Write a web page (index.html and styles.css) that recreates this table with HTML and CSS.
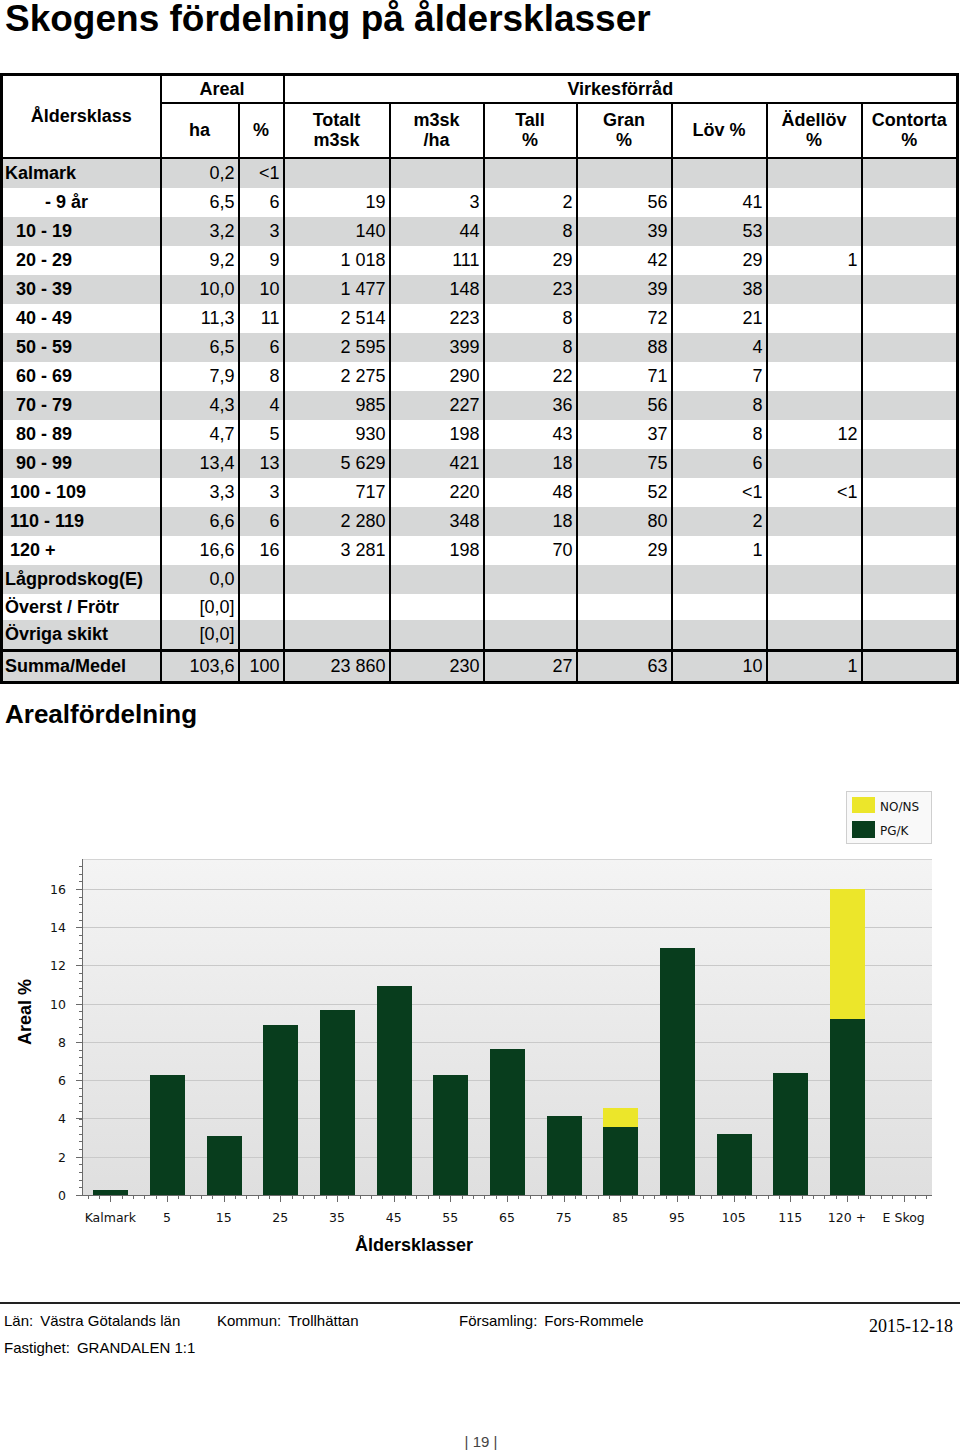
FILE: index.html
```html
<!DOCTYPE html>
<html lang="sv">
<head>
<meta charset="utf-8">
<title>Skogens fördelning på åldersklasser</title>
<link rel="stylesheet" href="styles.css">
</head>
<body>
<h1 class="title">Skogens fördelning på åldersklasser</h1>
<table class="dist">
  <colgroup>
    <col class="w-klass"><col class="w-ha"><col class="w-pct"><col class="w-tot"><col class="w-mha">
    <col class="w-tall"><col class="w-sp"><col class="w-sp"><col class="w-sp"><col class="w-last">
  </colgroup>
  <thead>
    <tr class="hr1">
      <th rowspan="2">Åldersklass</th>
      <th colspan="2">Areal</th>
      <th colspan="7">Virkesförråd</th>
    </tr>
    <tr class="hr2">
      <th>ha</th><th>%</th><th>Totalt<br>m3sk</th><th>m3sk<br>/ha</th><th>Tall<br>%</th><th>Gran<br>%</th><th>Löv %</th><th>Ädellöv<br>%</th><th>Contorta<br>%</th>
    </tr>
  </thead>
  <tbody>
    <tr class="g"><td class="lbl">Kalmark</td><td>0,2</td><td>&lt;1</td><td></td><td></td><td></td><td></td><td></td><td></td><td></td></tr>
    <tr><td class="lbl i1">- 9 år</td><td>6,5</td><td>6</td><td>19</td><td>3</td><td>2</td><td>56</td><td>41</td><td></td><td></td></tr>
    <tr class="g"><td class="lbl i2">10 - 19</td><td>3,2</td><td>3</td><td>140</td><td>44</td><td>8</td><td>39</td><td>53</td><td></td><td></td></tr>
    <tr><td class="lbl i2">20 - 29</td><td>9,2</td><td>9</td><td>1 018</td><td>111</td><td>29</td><td>42</td><td>29</td><td>1</td><td></td></tr>
    <tr class="g"><td class="lbl i2">30 - 39</td><td>10,0</td><td>10</td><td>1 477</td><td>148</td><td>23</td><td>39</td><td>38</td><td></td><td></td></tr>
    <tr><td class="lbl i2">40 - 49</td><td>11,3</td><td>11</td><td>2 514</td><td>223</td><td>8</td><td>72</td><td>21</td><td></td><td></td></tr>
    <tr class="g"><td class="lbl i2">50 - 59</td><td>6,5</td><td>6</td><td>2 595</td><td>399</td><td>8</td><td>88</td><td>4</td><td></td><td></td></tr>
    <tr><td class="lbl i2">60 - 69</td><td>7,9</td><td>8</td><td>2 275</td><td>290</td><td>22</td><td>71</td><td>7</td><td></td><td></td></tr>
    <tr class="g"><td class="lbl i2">70 - 79</td><td>4,3</td><td>4</td><td>985</td><td>227</td><td>36</td><td>56</td><td>8</td><td></td><td></td></tr>
    <tr><td class="lbl i2">80 - 89</td><td>4,7</td><td>5</td><td>930</td><td>198</td><td>43</td><td>37</td><td>8</td><td>12</td><td></td></tr>
    <tr class="g"><td class="lbl i2">90 - 99</td><td>13,4</td><td>13</td><td>5 629</td><td>421</td><td>18</td><td>75</td><td>6</td><td></td><td></td></tr>
    <tr><td class="lbl i3">100 - 109</td><td>3,3</td><td>3</td><td>717</td><td>220</td><td>48</td><td>52</td><td>&lt;1</td><td>&lt;1</td><td></td></tr>
    <tr class="g"><td class="lbl i3">110 - 119</td><td>6,6</td><td>6</td><td>2 280</td><td>348</td><td>18</td><td>80</td><td>2</td><td></td><td></td></tr>
    <tr><td class="lbl i3">120 +</td><td>16,6</td><td>16</td><td>3 281</td><td>198</td><td>70</td><td>29</td><td>1</td><td></td><td></td></tr>
    <tr class="g"><td class="lbl">Lågprodskog(E)</td><td>0,0</td><td></td><td></td><td></td><td></td><td></td><td></td><td></td><td></td></tr>
    <tr class="short"><td class="lbl">Överst / Frötr</td><td>[0,0]</td><td></td><td></td><td></td><td></td><td></td><td></td><td></td><td></td></tr>
    <tr class="g"><td class="lbl">Övriga skikt</td><td>[0,0]</td><td></td><td></td><td></td><td></td><td></td><td></td><td></td><td></td></tr>
    <tr class="g sum"><td class="lbl">Summa/Medel</td><td>103,6</td><td>100</td><td>23 860</td><td>230</td><td>27</td><td>63</td><td>10</td><td>1</td><td></td></tr>
  </tbody>
</table>

<h2 class="subtitle">Arealfördelning</h2>

<svg class="chart" width="960" height="540" viewBox="0 0 960 540" xmlns="http://www.w3.org/2000/svg">
  <defs>
    <linearGradient id="bg" x1="0" y1="0" x2="0" y2="1">
      <stop offset="0" stop-color="#f4f4f4"/>
      <stop offset="1" stop-color="#dfdfdf"/>
    </linearGradient>
  </defs>
  <!-- legend -->
  <rect x="846.5" y="61.5" width="85" height="52" fill="#f9f9f9" stroke="#cfcfcf"/>
  <rect x="852" y="67" width="23" height="16" fill="#ece62a"/>
  <rect x="852" y="91" width="23" height="17" fill="#083d1d"/>
  <text class="lg" x="880" y="81">NO/NS</text>
  <text class="lg" x="880" y="105">PG/K</text>

  <!-- plot area -->
  <rect x="82" y="129" width="850" height="336" fill="url(#bg)"/>
  <line x1="82" y1="129.5" x2="932" y2="129.5" stroke="#d4d4d4"/>
  <g stroke="#c9c9c9" stroke-width="1">
    <line x1="82" y1="159.5" x2="932" y2="159.5"/>
    <line x1="82" y1="197.5" x2="932" y2="197.5"/>
    <line x1="82" y1="235.5" x2="932" y2="235.5"/>
    <line x1="82" y1="274.5" x2="932" y2="274.5"/>
    <line x1="82" y1="312.5" x2="932" y2="312.5"/>
    <line x1="82" y1="350.5" x2="932" y2="350.5"/>
    <line x1="82" y1="388.5" x2="932" y2="388.5"/>
    <line x1="82" y1="427.5" x2="932" y2="427.5"/>
  </g>

  <!-- bars -->
  <g fill="#083d1d">
    <rect x="93" y="460" width="35" height="5"/>
    <rect x="150" y="345" width="35" height="120"/>
    <rect x="207" y="406" width="35" height="59"/>
    <rect x="263" y="295" width="35" height="170"/>
    <rect x="320" y="280" width="35" height="185"/>
    <rect x="377" y="256" width="35" height="209"/>
    <rect x="433" y="345" width="35" height="120"/>
    <rect x="490" y="319" width="35" height="146"/>
    <rect x="547" y="386" width="35" height="79"/>
    <rect x="603" y="397" width="35" height="68"/>
    <rect x="660" y="218" width="35" height="247"/>
    <rect x="717" y="404" width="35" height="61"/>
    <rect x="773" y="343" width="35" height="122"/>
    <rect x="830" y="289" width="35" height="176"/>
  </g>
  <g fill="#ece62a">
    <rect x="603" y="378" width="35" height="19"/>
    <rect x="830" y="159" width="35" height="130"/>
  </g>

  <!-- axes -->
  <g stroke="#6a6a6a" stroke-width="1">
    <line x1="82.5" y1="129" x2="82.5" y2="466"/>
    <line x1="76" y1="465.5" x2="932" y2="465.5"/>
    <line x1="76" y1="159.5" x2="82" y2="159.5"/>
    <line x1="76" y1="197.5" x2="82" y2="197.5"/>
    <line x1="76" y1="235.5" x2="82" y2="235.5"/>
    <line x1="76" y1="274.5" x2="82" y2="274.5"/>
    <line x1="76" y1="312.5" x2="82" y2="312.5"/>
    <line x1="76" y1="350.5" x2="82" y2="350.5"/>
    <line x1="76" y1="388.5" x2="82" y2="388.5"/>
    <line x1="76" y1="427.5" x2="82" y2="427.5"/>
  </g>
  <g id="yminor" stroke="#6a6a6a" stroke-width="1"></g>
  <g id="xticks" stroke="#6a6a6a" stroke-width="1"></g>

  <g class="ax" text-anchor="end">
    <text x="66" y="164">16</text>
    <text x="66" y="202">14</text>
    <text x="66" y="240">12</text>
    <text x="66" y="279">10</text>
    <text x="66" y="317">8</text>
    <text x="66" y="355">6</text>
    <text x="66" y="393">4</text>
    <text x="66" y="432">2</text>
    <text x="66" y="470">0</text>
  </g>
  <g class="ax" text-anchor="middle">
    <text x="110.3" y="492">Kalmark</text>
    <text x="167" y="492">5</text>
    <text x="223.7" y="492">15</text>
    <text x="280.3" y="492">25</text>
    <text x="337" y="492">35</text>
    <text x="393.7" y="492">45</text>
    <text x="450.3" y="492">55</text>
    <text x="507" y="492">65</text>
    <text x="563.7" y="492">75</text>
    <text x="620.3" y="492">85</text>
    <text x="677" y="492">95</text>
    <text x="733.7" y="492">105</text>
    <text x="790.3" y="492">115</text>
    <text x="847" y="492">120 +</text>
    <text x="903.7" y="492">E Skog</text>
  </g>
  <text class="axt" x="25" y="288" text-anchor="middle" transform="rotate(-90 25 282)">Areal %</text>
  <text class="axt" x="414" y="521" text-anchor="middle">Åldersklasser</text>
</svg>

<footer class="foot">
  <div class="frow">
    <span class="f f1"><span class="k">Län:</span>Västra Götalands län</span>
    <span class="f f2"><span class="k">Kommun:</span>Trollhättan</span>
    <span class="f f3"><span class="k">Församling:</span>Fors-Rommele</span>
    <span class="date">2015-12-18</span>
  </div>
  <div class="frow2"><span class="k">Fastighet:</span>GRANDALEN 1:1</div>
</footer>
<div class="pnum">| 19 |</div>

<script src="chart.js"></script>
</body>
</html>
```

FILE: chart.js
```js
(function () {
  var ns = "http://www.w3.org/2000/svg";
  function ln(g, x1, y1, x2, y2) {
    var l = document.createElementNS(ns, "line");
    l.setAttribute("x1", x1); l.setAttribute("y1", y1);
    l.setAttribute("x2", x2); l.setAttribute("y2", y2);
    g.appendChild(l);
  }
  var ym = document.getElementById("yminor");
  var k = 19.125;
  for (var v = 0; v <= 17.5; v += 0.4) {
    var y = Math.round(465 - v * k) + 0.5;
    if (y < 129) break;
    ln(ym, 79, y, 82, y);
  }
  var xt = document.getElementById("xticks");
  var step = 850 / 75;
  for (var j = 0; j < 75; j++) {
    var x = Math.round(82 + step * (j + 0.5)) + 0.5;
    var major = (j % 5) === 2;
    ln(xt, x, 466, x, major ? 472 : 469);
  }
})();
```

FILE: styles.css
```css
html, body {
  margin: 0;
  padding: 0;
  background: #fff;
}
body {
  width: 960px;
  font-family: "Liberation Sans", Arial, sans-serif;
  color: #000;
}
.title {
  margin: 0;
  padding-left: 5px;
  font-size: 37px;
  line-height: 38px;
  font-weight: bold;
}
.dist {
  margin: 35px 0 0 0;
  width: 959px;
  border-collapse: collapse;
  table-layout: fixed;
  border: 3px solid #000;
  font-size: 18px;
}
.w-klass { width: 159px; }
.w-ha { width: 78px; }
.w-pct { width: 45px; }
.w-tot { width: 106px; }
.w-mha { width: 94px; }
.w-tall { width: 93px; }
.w-sp { width: 95px; }
.w-last { width: 96px; }
.dist th {
  border: 2px solid #000;
  padding: 0;
  font-weight: bold;
  text-align: center;
  vertical-align: middle;
  line-height: 20px;
}
.hr1 { height: 28px; }
.hr2 { height: 55px; }
.dist td {
  height: 29px;
  padding: 0 3px 0 2px;
  border-left: 2px solid #000;
  border-right: 2px solid #000;
  text-align: right;
  vertical-align: middle;
  line-height: 20px;
  white-space: nowrap;
}
.dist td.lbl {
  text-align: left;
  font-weight: bold;
}
.dist td.i1 { padding-left: 42px; }
.dist td.i2 { padding-left: 13px; }
.dist td.i3 { padding-left: 7px; }
.dist tr.short td { height: 26px; }
.dist tr.g td { background: #d6d7d7; }
.dist tr.sum td {
  height: 29px;
  border-top: 3px solid #000;
}
.subtitle {
  margin: 14px 0 0 0;
  padding-left: 5px;
  font-size: 26px;
  line-height: 32px;
  font-weight: bold;
}
.chart {
  display: block;
}
.chart .ax, .chart .lg {
  font-family: "DejaVu Sans", Verdana, sans-serif;
  font-size: 12.5px;
  fill: #111;
}
.chart .lg { font-size: 12px; }
.chart .axt {
  font-family: "Liberation Sans", Arial, sans-serif;
  font-weight: bold;
  font-size: 18px;
  fill: #000;
}
.foot {
  margin-top: 32px;
  border-top: 2px solid #222;
  font-size: 15px;
}
.frow {
  display: flex;
  height: 20px;
  padding-top: 7px;
  line-height: 20px;
}
.f { display: block; padding-left: 4px; }
.f1 { width: 209px; }
.f2 { width: 238px; }
.f3 { flex: 1; }
.k { margin-right: 7px; }
.date {
  padding: 5px 7px 0 0;
  font-family: "Liberation Serif", "Times New Roman", serif;
  font-size: 18px;
  line-height: 20px;
}
.frow2 {
  margin-top: 7px;
  padding-left: 4px;
  line-height: 20px;
}
.pnum {
  margin-top: 75px;
  text-align: center;
  font-size: 15px;
  line-height: 18px;
  color: #444;
  padding-left: 2px;
}
```
